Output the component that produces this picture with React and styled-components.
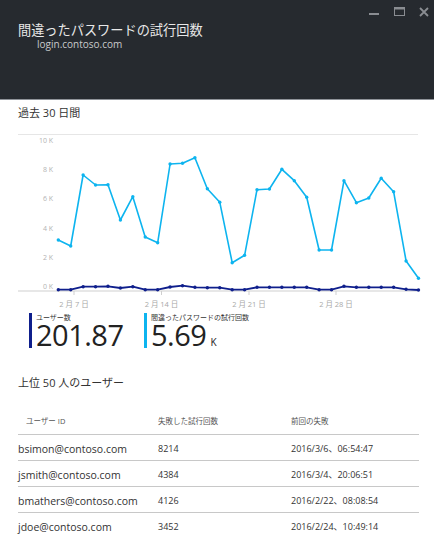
import React from "react";
import styled, { createGlobalStyle } from "styled-components";

const GlobalStyle = createGlobalStyle`
  html, body { margin: 0; padding: 0; background: #fff; overflow: hidden; }
  body { font-family: "Open Sans", "Noto Sans", "Noto Sans CJK JP", sans-serif; }
  * { box-sizing: border-box; }
`;

const FONT = `"Open Sans", "Noto Sans", "Noto Sans CJK JP", sans-serif`;

const Page = styled.div`
  width: 434px;
  height: 537px;
  background: #fff;
`;

const Header = styled.header`
  height: 100px;
  background: #262a2f;
  border-bottom: 1px solid #8f9399;
  display: flex;
  justify-content: space-between;
  align-items: flex-start;
`;

const TitleBlock = styled.div`
  padding: 22px 0 0 18px;
`;

const Title = styled.h1`
  margin: 0;
  font: 400 13.2px/16px ${FONT};
  color: #e8e8e8;
`;

const Subtitle = styled.div`
  margin: 0 0 0 19px;
  font: 400 10px/12px ${FONT};
  color: #c9cacc;
`;

const Controls = styled.div`
  display: flex;
  align-items: flex-start;
  gap: 14px;
  padding: 7px 5px 0 0;
`;

const Main = styled.main`
  padding: 0 16px 0 18px;
`;

const SectionTitle = styled.h2`
  margin: ${(p) => p.$top}px 0 0;
  font: 400 11px/14px ${FONT};
  color: #333;
`;

const ChartBox = styled.div`
  margin-top: 10px;
  width: 400px;
  height: 180px;
`;

const Legend = styled.div`
  display: flex;
  margin-top: 3px;
  padding-left: 11px;
  height: 35px;
`;

const LegendItem = styled.div`
  width: ${(p) => p.$w}px;
  display: flex;
  align-items: stretch;
`;

const LegendBar = styled.div`
  width: 3px;
  background: ${(p) => p.$color};
  margin-right: 4px;
`;

const LegendText = styled.div`
  display: flex;
  flex-direction: column;
`;

const LegendLabel = styled.div`
  font: 400 7px/9px ${FONT};
  color: #333;
  white-space: nowrap;
`;

const LegendValue = styled.div`
  font: 400 29px/25px ${FONT};
  letter-spacing: -0.5px;
  color: #222;
  white-space: nowrap;
  height: 25px;
`;

const Unit = styled.span`
  font-size: 10px;
  line-height: 0;
  letter-spacing: 0;
  margin-left: 4px;
`;

const Table = styled.div`
  margin-top: 18px;
  width: 401px;
`;

const Row = styled.div`
  display: grid;
  grid-template-columns: 140px 133px 1fr;
  align-items: center;
  height: ${(p) => p.$h}px;
  border-bottom: ${(p) => (p.$last ? "none" : "1px solid #c8c8c8")};
  padding-top: ${(p) => p.$pt || 0}px;
`;

const HeadCell = styled.div`
  font: 400 7.5px/10px ${FONT};
  color: #555;
  padding-left: ${(p) => p.$pl || 0}px;
  white-space: nowrap;
`;

const EmailCell = styled.div`
  font: 400 10.5px/14px ${FONT};
  color: #333;
  white-space: nowrap;
`;

const Cell = styled.div`
  font: 400 9px/12px ${FONT};
  color: #333;
  white-space: nowrap;
`;

const light = [240, 246, 175, 185, 184.7, 220, 196.7, 237, 242.7, 164, 163.3, 157.7, 188.7, 202.3, 262.7, 255.3, 189.7, 189, 169.3, 180.7, 197.3, 250, 250, 180.7, 202.7, 198, 178.3, 191.7, 261, 278.3];
const dark = [289.7, 289.7, 286.7, 286.7, 286.3, 288, 286.7, 289.7, 289.7, 287, 285.7, 287.3, 287.7, 287.7, 289.7, 289.7, 287.3, 287.3, 287.3, 287.3, 287.3, 289.7, 289.7, 286.3, 287.3, 287.3, 287.3, 287.3, 289.3, 290];

const px = (i) => 40.3 + 12.42 * i;
const toPts = (arr) => arr.map((y, i) => `${px(i).toFixed(1)},${(y - 130).toFixed(1)}`).join(" ");

const yLabels = [
  ["10 K", 10],
  ["8 K", 39],
  ["6 K", 68],
  ["4 K", 98],
  ["2 K", 127],
  ["0 K", 156],
];
const xTicks = [
  ["2 月 7 日", 56],
  ["2 月 14 日", 143.5],
  ["2 月 21 日", 231],
  ["2 月 28 日", 318],
];

function Chart() {
  return (
    <svg width="400" height="180" viewBox="0 0 400 180" style={{ display: "block", overflow: "visible" }}>
      <line x1="0" y1="4.5" x2="400" y2="4.5" stroke="#e6e6e6" strokeWidth="1" />
      <line x1="0" y1="161" x2="400" y2="161" stroke="#cfcfcf" strokeWidth="1" />
      {yLabels.map(([t, y]) => (
        <text key={t} x="35" y={y + 2.5} textAnchor="end" fontSize="7" fill="#b3b3b3" fontFamily="Open Sans, Noto Sans, sans-serif">
          {t}
        </text>
      ))}
      {xTicks.map(([t, x]) => (
        <g key={t}>
          <line x1={x} y1="161" x2={x} y2="165" stroke="#cfcfcf" strokeWidth="1" />
          <text x={x} y="177" textAnchor="middle" fontSize="7.5" fill="#a8a8a8" fontFamily="Open Sans, Noto Sans CJK JP, sans-serif">
            {t}
          </text>
        </g>
      ))}
      <polyline points={toPts(light)} fill="none" stroke="#0db4ef" strokeWidth="1.6" strokeLinejoin="round" />
      {light.map((y, i) => (
        <circle key={"l" + i} cx={px(i)} cy={y - 130} r="1.7" fill="#0db4ef" />
      ))}
      <polyline points={toPts(dark)} fill="none" stroke="#0f1f8c" strokeWidth="1.8" strokeLinejoin="round" />
      {dark.map((y, i) => (
        <circle key={"d" + i} cx={px(i)} cy={y - 130} r="1.7" fill="#0f1f8c" />
      ))}
    </svg>
  );
}

function WindowControls() {
  return (
    <Controls>
      <svg width="11" height="10" viewBox="0 0 11 10">
        <rect x="0" y="6" width="10" height="2" fill="#8a8d92" />
      </svg>
      <svg width="11" height="10" viewBox="0 0 11 10">
        <rect x="0.5" y="0.5" width="10" height="8" fill="none" stroke="#8a8d92" strokeWidth="1" />
        <rect x="0.5" y="0.5" width="10" height="2" fill="#8a8d92" />
      </svg>
      <svg width="10" height="10" viewBox="0 0 10 10">
        <path d="M1 1 L9 9 M9 1 L1 9" stroke="#8a8d92" strokeWidth="1.8" />
      </svg>
    </Controls>
  );
}

const rows = [
  ["bsimon@contoso.com", "8214", "2016/3/6、06:54:47"],
  ["jsmith@contoso.com", "4384", "2016/3/4、20:06:51"],
  ["bmathers@contoso.com", "4126", "2016/2/22、08:08:54"],
  ["jdoe@contoso.com", "3452", "2016/2/24、10:49:14"],
];

export default function App() {
  return (
    <Page>
      <GlobalStyle />
      <Header>
        <TitleBlock>
          <Title>間違ったパスワードの試行回数</Title>
          <Subtitle>login.contoso.com</Subtitle>
        </TitleBlock>
        <WindowControls />
      </Header>
      <Main>
        <SectionTitle $top={6}>過去 30 日間</SectionTitle>
        <ChartBox>
          <Chart />
        </ChartBox>
        <Legend>
          <LegendItem $w={115}>
            <LegendBar $color="#0f1f8c" />
            <LegendText>
              <LegendLabel>ユーザー数</LegendLabel>
              <LegendValue>201.87</LegendValue>
            </LegendText>
          </LegendItem>
          <LegendItem $w={150}>
            <LegendBar $color="#0db4ef" />
            <LegendText>
              <LegendLabel>間違ったパスワードの試行回数</LegendLabel>
              <LegendValue>
                5.69<Unit>K</Unit>
              </LegendValue>
            </LegendText>
          </LegendItem>
        </Legend>
        <SectionTitle $top={28}>上位 50 人のユーザー</SectionTitle>
        <Table>
          <Row $h={27}>
            <HeadCell $pl={8}>ユーザー ID</HeadCell>
            <HeadCell>失敗した試行回数</HeadCell>
            <HeadCell>前回の失敗</HeadCell>
          </Row>
          {rows.map((r, i) => (
            <Row key={r[0]} $h={26} $pt={2} $last={i === rows.length - 1}>
              <EmailCell>{r[0]}</EmailCell>
              <Cell>{r[1]}</Cell>
              <Cell>{r[2]}</Cell>
            </Row>
          ))}
        </Table>
      </Main>
    </Page>
  );
}
